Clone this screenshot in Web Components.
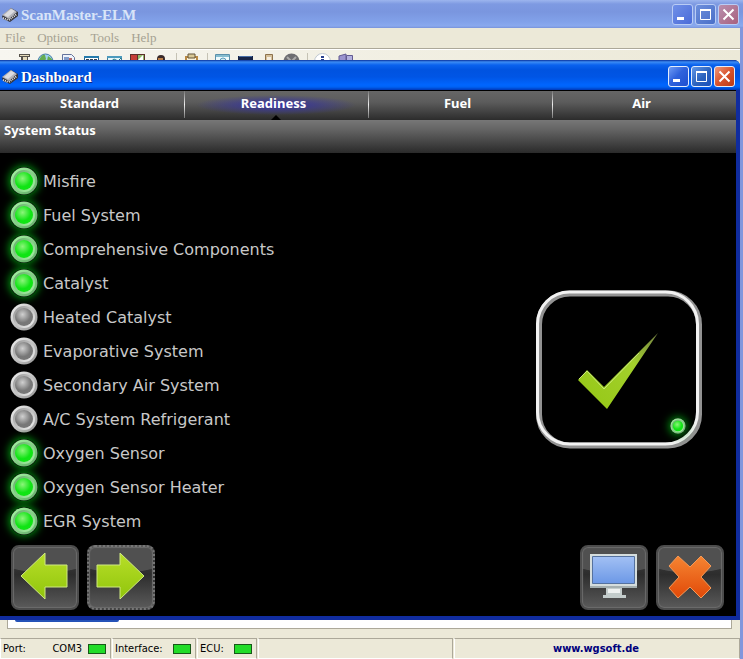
<!DOCTYPE html>
<html lang="en">
<head>
<meta charset="utf-8">
<title>ScanMaster-ELM</title>
<style>
html, body { margin: 0; height: 100%; }
body { font-family: "DejaVu Sans Condensed", "DejaVu Sans", sans-serif; font-size: 11px; background: #ece9d8; }
</style>
</head>
<body>
<scan-app></scan-app>
<script>
function define(name, html, setup) {
  const template = document.createElement('template');
  template.innerHTML = html;
  customElements.define(name, class extends HTMLElement {
    constructor() {
      super();
      this.attachShadow({ mode: 'open' }).append(template.content.cloneNode(true));
    }
    connectedCallback() { if (setup) setup(this, this.shadowRoot); }
  });
}

define('xp-titlebar', `
<style>
:host { display: flex; align-items: center; box-sizing: border-box; flex: none; height: 30px; padding: 3px 1px 0 2px; color: #fff;
  background: linear-gradient(#08319c 0, #3c8cf4 2px, #0a62ee 5px, #0053e0 10px, #0055e5 17px, #0066ff 25px, #0062f4 27px, #0038b8 30px); }
:host([inactive]) { height: 28px; padding: 1px 4px 0 2px; color: #d8e4f8;
  background: linear-gradient(#9cb5ee 0, #7e9ae2 4px, #7a96df 12px, #82a2ea 22px, #8aa9ee 26px, #7792da 28px); }
h1 { flex: 1; margin: 0; font: bold 15px/20px "Liberation Serif", serif; text-shadow: 1px 1px #0a2a8c; }
:host([inactive]) h1 { text-shadow: none; }
.chip { width: 16px; height: 16px; margin-right: 3px; }
.controls { display: flex; gap: 2px; }
button { width: 21px; height: 21px; padding: 0; border: 1px solid #e4edfb; border-radius: 3px; background: linear-gradient(135deg, #6f9cf5, #2f62dc 45%, #1d4fd0); }
button.max { background: linear-gradient(135deg, #6297e8, #2a62bd 55%, #1b50bb); }
button.close { background: linear-gradient(135deg, #ee9a7e, #d9532c 50%, #bb3a16); }
:host([inactive]) button { border-color: #b9ccf5; background: linear-gradient(135deg, #7090e8, #4a6bd8); }
:host([inactive]) .max { background: linear-gradient(135deg, #6d8fdc, #4a6fc8); }
:host([inactive]) .close { background: linear-gradient(135deg, #b98fae, #a8607e); }
button svg { display: block; width: 19px; height: 19px; }
</style>
<svg class="chip" viewBox="0 0 16 16"><path d="M0 9 9 1l7 4v4l-8 6-7-3z" fill="#34343c"/><path d="M0 8 9 1l6 4-8 7z" fill="#b4b4ba"/><path d="m2 8 7-6 4 2-7 6z" fill="#dcdce0"/><path d="m7 13 8-6M1 11l5 2" stroke="#e5e5e5" stroke-width="2" stroke-dasharray="1 1"/></svg>
<h1><slot></slot></h1>
<div class="controls">
<button aria-label="Minimize"><svg viewBox="0 0 19 19"><path d="M4 12h7v3H4z" fill="#fff"/></svg></button>
<button class="max" aria-label="Maximize"><svg viewBox="0 0 19 19"><path d="M4.500 5h10v9.500h-10z" fill="none" stroke="#fff"/><path d="M4 4h11v2H4z" fill="#fff"/></svg></button>
<button class="close" aria-label="Close"><svg viewBox="0 0 19 19"><path d="m4.500 4.500 10 10m0-10-10 10" stroke="#fff" stroke-width="2"/></svg></button>
</div>`);

define('app-menu', `
<style>
:host { display: flex; flex: none; gap: 12px; padding: 0 5px; height: 20px; background: #ece9d8; border-bottom: 1px solid #aca899; }
button { border: 0; padding: 0; background: none; color: #a5a192; font: 13px/18px "Liberation Serif", serif; }
</style>
<button>File</button><button>Options</button><button>Tools</button><button>Help</button>`);

define('tool-strip', `
<style>
:host { display: flex; flex: none; align-items: flex-start; box-sizing: border-box; height: 11px; padding: 3px 0 0 11px; overflow: hidden; border-top: 1px solid #fff;
  background: linear-gradient(90deg, #f7f6f0, #ece9d8); }
:host > button { flex: none; }
button { display: block; width: 23px; height: 17px; padding: 0 3px; border: 0; background: none; }
svg { display: block; width: 17px; height: 17px; }
i { flex: none; width: 8px; height: 17px; background: linear-gradient(90deg, transparent 4px, #c5c2b4 4px, #c5c2b4 5px, transparent 5px); }
</style>
<button aria-label="Connect"><svg viewBox="0 0 17 17"><path d="M5 1h11v3h-2v12H7V4H5z" fill="#57534b"/><path d="M6 2h9v1H6zm3 2h4v12H9z" fill="#e6dcbb"/></svg></button>
<button aria-label="Web"><svg viewBox="0 0 17 17"><circle cx="8.500" cy="8.500" r="7.500" fill="#9fd2ef" stroke="#477da5"/><path d="M2 7q3-6 6-5l1 4-3 5q-4 0-4-4m9-4 4 3-1 6-4-4z" fill="#65ad50"/></svg></button>
<button aria-label="Report"><svg viewBox="0 0 17 17"><path d="M2.500 1.500h9l3 3v12h-12z" fill="#eef3fb" stroke="#65739b"/><path d="M4 4h5v10H4z" fill="#809bca"/><path d="M9 5h3v8H9z" fill="#b56666"/></svg></button>
<button aria-label="Gauges"><svg viewBox="0 0 17 17"><path d="M1.500 3.500h14v12h-14z" fill="#fff" stroke="#245f88"/><path d="M1 3h15v2H1z" fill="#257bac"/><path d="M3 6h3v5H3zm4 0h3v5H7zm4 0h3v5h-3z" fill="#345"/></svg></button>
<button aria-label="Graph"><svg viewBox="0 0 17 17"><path d="M1.500 3.500h14v12h-14z" fill="#e6f6fa" stroke="#3e7d9c"/><path d="M1 3h15v2H1z" fill="#4c9abd"/><path d="m3 10 5-4 4 2 3-3" stroke="#247b86" fill="none"/></svg></button>
<button aria-label="Map"><svg viewBox="0 0 17 17"><path d="M1 1h15v15H1z" fill="#5d2f2b"/><path d="M2 2h6v6H2z" fill="#c63f38"/><path d="M9 2h6v6H9z" fill="#8fbb6c"/><path d="m8 8 6-6v6z" fill="#fff"/></svg></button>
<button aria-label="User"><svg viewBox="0 0 17 17"><circle cx="9" cy="6" r="4" fill="#392a2a"/><path d="M6 5h5v6H6z" fill="#bc7e47"/></svg></button>
<i></i>
<button aria-label="Clipboard"><svg viewBox="0 0 17 17"><path d="M2 3h13v13H2z" fill="#b98a45"/><path d="M4 5h9v10H4z" fill="#f8f1d9"/><path d="M5 1h7v4H5z" fill="#d8c895" stroke="#645439"/></svg></button>
<i></i>
<button aria-label="Search"><svg viewBox="0 0 17 17"><path d="M1.500 1.500h14v14h-14z" fill="#eefafd" stroke="#5b90aa"/><path d="M2 2h13v2H2z" fill="#85bdd0"/><circle cx="9" cy="8" r="3" fill="#cde8ef" stroke="#5b9cbb"/></svg></button>
<button aria-label="Terminal"><svg viewBox="0 0 17 17"><path d="M1 3h15v12H1z" fill="#162447"/><path d="M2 3h13v1H2z" fill="#476da6"/></svg></button>
<button aria-label="Device"><svg viewBox="0 0 17 17"><path d="M5.500 1.500h7v14h-7z" fill="#d5c09a" stroke="#8d724c"/><path d="M7 4h4v7H7z" fill="#f5eee1"/></svg></button>
<button aria-label="Stop"><svg viewBox="0 0 17 17"><circle cx="8.500" cy="8.500" r="8" fill="#6d6d71"/><path d="m4 4 9 9m0-9-9 9" stroke="#aaa" stroke-width="2"/></svg></button>
<i></i>
<button aria-label="Information"><svg viewBox="0 0 17 17"><circle cx="8.500" cy="8.500" r="8" fill="#fff" stroke="#bec7d0"/><path d="M7 3h3v2H7zm0 3h3v6H7z" fill="#28408e"/></svg></button>
<button aria-label="Exit"><svg viewBox="0 0 17 17"><path d="m2 3 7-2v15l-7-2z" fill="#9a93cf" stroke="#625a91"/><path d="M9.500 2.500h6v11h-6z" fill="#b2b0df" stroke="#625a91"/></svg></button>`);

define('nav-tabs', `
<style>
:host { display: flex; flex: none; height: 30px; background: linear-gradient(#000 1px, #666 1px, #5c5c5c 12px, #2c2c2c 30px); }
::slotted(nav-tab) { flex: 1; }
</style><slot></slot>`);
define('nav-tab', `
<style>
:host { display: block; position: relative; min-width: 0; background: linear-gradient(#777, #eee 50%, #777) left 1px / 1px 27px no-repeat; }
:host(:first-child) { background: none; }
button { display: block; width: 100%; height: 30px; padding: 0 5px 4px 0; border: 0; background: none; color: #fff; font: bold 13px/26px "Noto Sans", sans-serif; }
:host([selected]) button { background: radial-gradient(ellipse 80px 10px at 50% 50%, #3431a8, #38369b99 50%, transparent); }
:host([selected])::after { content: ""; position: absolute; bottom: 0; left: calc(50% - 5px); border: 5px solid transparent; border-top: 0; border-bottom-color: #000; }
</style><button><slot></slot></button>`);

define('status-led', `
<style>
:host { display: block; flex: none; width: 28px; height: 28px; border-radius: 50%; }
:host([on]) { box-shadow: 0 0 9px 1px #009c10; }
svg { display: block; width: 100%; height: 100%; }
.a { stop-color: #929292; } .b { stop-color: #f4f4f4; } .c { stop-color: #d0d0d0; } .d { stop-color: #777; }
:host([on]) .a { stop-color: #62a868; } :host([on]) .b { stop-color: #a9f7a6; } :host([on]) .c { stop-color: #8cf57a; } :host([on]) .d { stop-color: #10e414; }
</style>
<svg viewBox="0 0 28 28"><defs>
<linearGradient id="outer" x2="1" y2="1"><stop class="b"/><stop offset="1" class="a"/></linearGradient>
<linearGradient id="inner" x2="1" y2="1"><stop class="a"/><stop offset="1" class="b"/></linearGradient>
<radialGradient id="lamp" cx=".42" cy=".36" r=".46"><stop class="c"/><stop offset="1" class="d"/></radialGradient></defs>
<circle cx="14" cy="14" r="13.500" fill="url(#outer)"/><circle cx="14" cy="14" r="11" fill="url(#inner)"/><circle cx="14" cy="14" r="9" fill="url(#lamp)"/></svg>`);

define('readiness-item', `
<style>
:host { display: flex; align-items: center; gap: 5px; height: 34px; color: #c8c8c8; font: 16px/32px "DejaVu Sans", sans-serif; white-space: nowrap; }
span { padding-top: 2px; }
</style><status-led></status-led><span><slot></slot></span>`,
(el, root) => root.querySelector('status-led').toggleAttribute('on', el.hasAttribute('ready')));

define('result-card', `
<style>
:host { display: block; }
svg { display: block; width: 168px; height: 160px; }
.card { position: relative; }
status-led { position: absolute; right: 17px; bottom: 16px; width: 16px; height: 16px; }
</style>
<div class="card"><svg viewBox="0 0 168 160" role="img" aria-label="Ready"><defs><linearGradient id="tick" x1="0" x2="1" y1="1" y2="0"><stop stop-color="#94c714"/><stop offset=".65" stop-color="#a3d02c"/><stop offset="1" stop-color="#738044"/></linearGradient></defs>
<rect x="4" y="3.500" width="160" height="152" rx="31" fill="none" stroke="#929292" stroke-width="6"/>
<rect x="2.500" y="2" width="160" height="152" rx="32" fill="none" stroke="#f2f2f2" stroke-width="3"/>
<path d="m43 90 9-10 17 17 54-54-51 76z" fill="url(#tick)"/><path d="m44 89 8-8 17 18 35-36" fill="none" stroke="#c9e77c"/></svg>
<status-led on></status-led></div>`);

define('glass-button', `
<style>
:host { display: block; flex: none; }
button { display: block; box-sizing: border-box; width: 68px; height: 65px; padding: 0; border: 2px solid #4c4c4c; border-radius: 8px;
  box-shadow: inset 0 0 1px 1px #6c6c6c;
  background: radial-gradient(ellipse 60px 26px at 50% 0, #505050 97%, transparent) top / 100% 27px no-repeat, linear-gradient(#454545, #2d2d2d 45%, #5a5a5a); }
:host([focused]) button { border-style: dotted; border-color: #777; }
::slotted(svg) { display: block; width: 64px; height: 61px; }
</style><button><slot></slot></button>`,
(el, root) => root.querySelector('button').setAttribute('aria-label', el.getAttribute('label')));

define('dashboard-window', `
<style>
:host { display: flex; flex-direction: column; background: #000; border: 0 solid #102c9f; border-width: 0 4px 4px 0; border-radius: 0 6px 0 0; }
xp-titlebar { margin-right: -4px; padding-right: 5px; border-radius: 0 6px 0 0; }
h2 { flex: none; box-sizing: border-box; height: 33px; margin: 0; padding: 1px 4px; color: #fff; font: bold 13px/18px "Noto Sans", sans-serif;
  background: linear-gradient(#777, #636363 10px, #2a2a2a); }
.body { display: flex; flex: 1; justify-content: space-between; padding: 11px 33px 0 10px; }
ul { list-style: none; margin: 0; padding: 0; }
result-card { margin-top: 126px; }
.actions { display: flex; gap: 8px; padding: 7px 12px 6px 11px; }
.space { flex: 1; }
</style>
<xp-titlebar>Dashboard</xp-titlebar>
<nav-tabs><nav-tab>Standard</nav-tab><nav-tab selected>Readiness</nav-tab><nav-tab>Fuel</nav-tab><nav-tab>Air</nav-tab></nav-tabs>
<h2>System Status</h2>
<div class="body">
<ul>
<li><readiness-item ready>Misfire</readiness-item></li>
<li><readiness-item ready>Fuel System</readiness-item></li>
<li><readiness-item ready>Comprehensive Components</readiness-item></li>
<li><readiness-item ready>Catalyst</readiness-item></li>
<li><readiness-item>Heated Catalyst</readiness-item></li>
<li><readiness-item>Evaporative System</readiness-item></li>
<li><readiness-item>Secondary Air System</readiness-item></li>
<li><readiness-item>A/C System Refrigerant</readiness-item></li>
<li><readiness-item ready>Oxygen Sensor</readiness-item></li>
<li><readiness-item ready>Oxygen Sensor Heater</readiness-item></li>
<li><readiness-item ready>EGR System</readiness-item></li>
</ul>
<result-card></result-card>
</div>
<div class="actions">
<glass-button label="Previous"><svg viewBox="0 0 64 61"><defs><linearGradient id="ar" x2="0" y2="1"><stop stop-color="#b8df28"/><stop offset="1" stop-color="#90c40c"/></linearGradient></defs><path d="M8 29 32 6v12h22v22H32v12z" fill="url(#ar)" stroke="#cfe982"/></svg></glass-button>
<glass-button label="Next" focused><svg viewBox="0 0 64 61"><defs><linearGradient id="al" x2="0" y2="1"><stop stop-color="#b8df28"/><stop offset="1" stop-color="#90c40c"/></linearGradient></defs><path d="M55 29 31 6v12H8v22h23v12z" fill="url(#al)" stroke="#cfe982"/></svg></glass-button>
<span class="space"></span>
<glass-button label="Monitor"><svg viewBox="0 0 64 61"><defs><linearGradient id="scr" x2="0" y2="1"><stop stop-color="#a2c0f4"/><stop offset="1" stop-color="#6c98e6"/></linearGradient></defs><path d="M24 40h16v8h4v3H21v-3h3z" fill="#c3cccb"/><path d="M26 42h12v4H26z" fill="#eef1f0"/><path d="M8 7h47v34H8z" fill="#d5dddd"/><path d="M10.500 9.500h42v27h-42z" fill="url(#scr)" stroke="#55729f"/><path d="M8 39h47v2H8z" fill="#a4afb0"/></svg></glass-button>
<glass-button label="Close dashboard"><svg viewBox="0 0 64 61"><defs><linearGradient id="cx" x2="0" y2="1"><stop stop-color="#f68532"/><stop offset="1" stop-color="#e14908"/></linearGradient></defs><path d="M20 9 32 20 43 9l10 10-10 11 10 11-10 10-11-11-12 11-9-10 10-11-10-11z" fill="url(#cx)" stroke="#f39a58" stroke-linejoin="round"/></svg></glass-button>
</div>`);

define('status-bar', `
<style>
:host { display: flex; flex: none; height: 21px; background: #ece9d8; color: #000; line-height: 18px; }
div { display: flex; align-items: center; box-sizing: border-box; border: 1px solid #aca899; border-color: #aca899 #aca899 #fff #fff; margin-right: 1px; padding: 0 4px 0 2px; white-space: nowrap; }
div:first-child { border-left: 0; }
.port { width: 111px; } .iface { width: 84px; } .ecu { width: 60px; } .blank { flex: 193; } .site { flex: 287; justify-content: center; margin: 0; }
span { flex: 1; } span + b { margin-left: 6px; }
span.value { flex: none; }
b { width: 16px; height: 8px; border: 1px solid #185818; background: #22dc28; }
a { color: #00007c; font-weight: bold; text-decoration: none; }
</style>
<div class="port"><span>Port:</span><span class="value">COM3</span><b></b></div>
<div class="iface"><span>Interface:</span><b></b></div>
<div class="ecu"><span>ECU:</span><b></b></div>
<div class="blank"></div>
<div class="site"><a href="#">www.wgsoft.de</a></div>`);

define('scan-app', `
<style>
:host { display: flex; flex-direction: column; min-height: 100vh; background: #ece9d8; }
.frame { display: flex; flex: 1; flex-direction: column; border-right: 3px solid #8296dc; }
.over { display: flex; flex: 1; flex-direction: column; background: #ece9d8; }
dashboard-window { flex: 1; }
.client { flex: none; height: 8px; margin: 0 8px 9px 7px; padding-left: 7px; background: #fff; border: 1px solid #aca899; border-top: 0; }
.client i { display: block; width: 104px; height: 2px; background: #2452b8; border-radius: 0 0 3px 3px; }
</style>
<xp-titlebar inactive>ScanMaster-ELM</xp-titlebar>
<div class="frame">
<app-menu></app-menu>
<tool-strip></tool-strip>
<div class="over"><dashboard-window></dashboard-window><div class="client"><i></i></div></div>
<status-bar></status-bar>
</div>`);
</script>
</body>
</html>
